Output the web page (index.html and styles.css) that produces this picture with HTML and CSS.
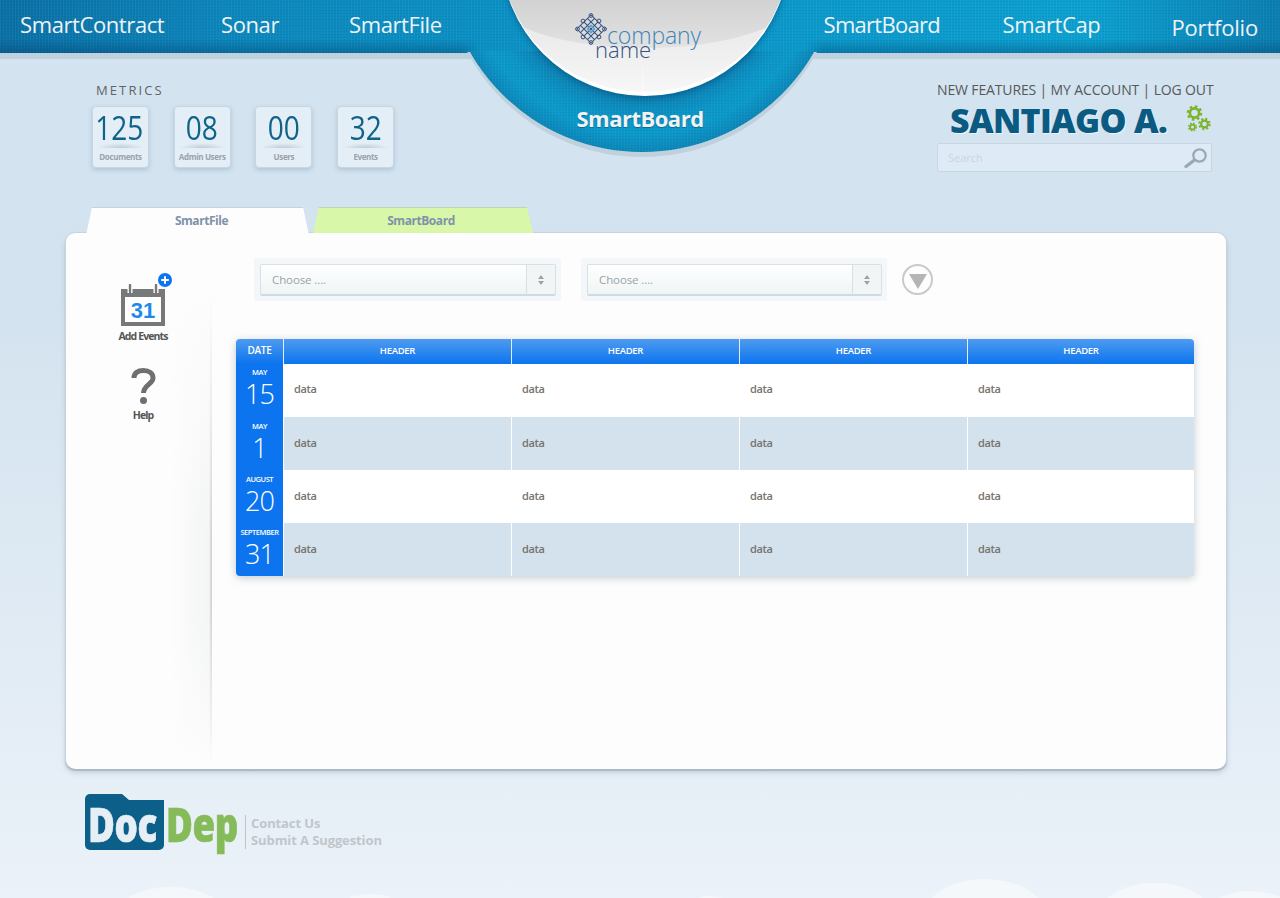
FILE: index.html
```html
<!DOCTYPE html>
<html lang="en">
<head>
<meta charset="utf-8">
<title>SmartBoard</title>
<link rel="stylesheet" href="styles.css">
</head>
<body>
<div class="clouds" aria-hidden="true"><i class="c1"></i><i class="c2"></i><i class="c3"></i><i class="c4"></i><i class="c5"></i><i class="c6"></i></div>
<header class="topbar">
  <nav class="nav nav-left"><a>SmartContract</a><a>Sonar</a><a>SmartFile</a></nav>
  <nav class="nav nav-right"><a>SmartBoard</a><a>SmartCap</a><a class="low">Portfolio</a></nav>
</header>
<div class="dome-shadow"></div>
<div class="dome">
  <div class="dome-bg"></div>
  <div class="plate">
    <div class="plate-shine"></div>
    <div class="logo">
      <svg class="flake" viewBox="0 0 32 32" fill="none" stroke="#33527f" stroke-width="1">
        <g transform="rotate(45 16 16)">
          <path d="M6 6h20v20H6zM11 6v20M16 6v20M21 6v20M6 11h20M6 16h20M6 21h20"/>
          <path d="M13.500 13.500h5v5h-5z" stroke="#5d9fd0" stroke-width="1.600"/>
        </g>
        <circle cx="16" cy="2.500" r="1.900"/><circle cx="16" cy="29.500" r="1.900"/><circle cx="2.500" cy="16" r="1.900"/><circle cx="29.500" cy="16" r="1.900"/>
        <circle cx="8" cy="8" r="1.900"/><circle cx="24" cy="8" r="1.900"/><circle cx="8" cy="24" r="1.900"/><circle cx="24" cy="24" r="1.900"/>
      </svg>
      <span class="logo-company">company</span>
      <span class="logo-name">name</span>
    </div>
  </div>
  <div class="dome-title">SmartBoard</div>
</div>

<section class="head">
  <div class="metrics">
    <h2 class="metrics-title">METRICS</h2>
    <div class="metric-row">
      <div class="metric"><b>125</b><span>Documents</span></div>
      <div class="metric"><b>08</b><span>Admin Users</span></div>
      <div class="metric"><b>00</b><span>Users</span></div>
      <div class="metric"><b>32</b><span>Events</span></div>
    </div>
  </div>
  <div class="account">
    <div class="account-links">NEW FEATURES | MY ACCOUNT | LOG OUT</div>
    <div class="account-user">
      <span class="user-name">SANTIAGO A.</span>
      <svg class="gears" viewBox="0 0 26 28" fill="none" stroke="#7cb42c">
        <circle cx="9.500" cy="8" r="4.600" stroke-width="2.600"/><circle cx="9.500" cy="8" r="6.600" stroke-width="2.400" stroke-dasharray="2.600 2.600"/>
        <circle cx="19.500" cy="19" r="3.400" stroke-width="2.200"/><circle cx="19.500" cy="19" r="5.200" stroke-width="2" stroke-dasharray="2.100 2"/>
        <circle cx="7.500" cy="22" r="2.400" stroke-width="1.800"/><circle cx="7.500" cy="22" r="3.800" stroke-width="1.600" stroke-dasharray="1.600 1.400"/>
      </svg>
    </div>
    <div class="search">
      <span>Search</span>
      <svg class="search-icon" viewBox="0 0 26 22" fill="none" stroke="#98a9b3">
        <circle cx="16.500" cy="8.500" r="6.200" stroke-width="2.200"/>
        <path d="M11.500 13L3 19.500" stroke-width="3.400" stroke-linecap="round"/>
      </svg>
    </div>
  </div>
</section>

<div class="tabs">
  <div class="tab tab-active">SmartFile</div>
  <div class="tab tab-green">SmartBoard</div>
</div>

<main class="card">
  <aside class="side">
    <div class="tool tool-events">
      <span class="badge"><svg viewBox="0 0 14 14"><circle cx="7" cy="7" r="7" fill="#0c74ee"/><path d="M7 3.200v7.600M3.200 7h7.600" stroke="#fff" stroke-width="2"/></svg></span>
      <svg class="cal" viewBox="0 0 44 42">
        <path d="M0 5h44v37H0z" fill="#77787a"/>
        <path d="M4 13h36v25H4z" fill="#fff"/>
        <path d="M9 0v9M35 0v9" stroke="#fff" stroke-width="5"/>
        <path d="M9 1v7M35 1v7" stroke="#77787a" stroke-width="2.400" stroke-linecap="round"/>
        <text x="22" y="34" text-anchor="middle" class="cal-num">31</text>
      </svg>
      <span class="tool-label">Add Events</span>
    </div>
    <div class="tool tool-help">
      <svg class="qmark" viewBox="0 0 25 36" fill="none" stroke="#6f6f6f">
        <path d="M3 10C3 5 7 2.500 12.500 2.500S22 5.500 22 10c0 6-9.500 7-9.500 15" stroke-width="5"/>
        <circle cx="12.500" cy="32.500" r="3.500" fill="#6f6f6f" stroke="none"/>
      </svg>
      <span class="tool-label">Help</span>
    </div>
  </aside>
  <div class="content">
    <div class="filters">
      <div class="select-wrap"><div class="select"><span class="select-text">Choose ....</span><span class="select-arrows"><i class="up"></i><i class="down"></i></span></div></div>
      <div class="select-wrap"><div class="select"><span class="select-text">Choose ....</span><span class="select-arrows"><i class="up"></i><i class="down"></i></span></div></div>
      <span class="go"><i></i></span>
    </div>
    <div class="table">
      <div class="th th-date">DATE</div><div class="th">HEADER</div><div class="th">HEADER</div><div class="th">HEADER</div><div class="th">HEADER</div>

      <div class="date"><small>MAY</small><b>15</b></div><div class="td">data</div><div class="td">data</div><div class="td">data</div><div class="td">data</div>
      <div class="date"><small>MAY</small><b>1</b></div><div class="td alt">data</div><div class="td alt">data</div><div class="td alt">data</div><div class="td alt">data</div>
      <div class="date"><small>AUGUST</small><b>20</b></div><div class="td">data</div><div class="td">data</div><div class="td">data</div><div class="td">data</div>
      <div class="date date-last"><small>SEPTEMBER</small><b>31</b></div><div class="td alt">data</div><div class="td alt">data</div><div class="td alt">data</div><div class="td alt">data</div>
    </div>
  </div>
</main>

<footer class="footer">
  <div class="brand">
    <div class="brand-doc"><span class="brand-text">Doc</span></div>
    <div class="brand-dep"><span class="brand-text">Dep</span></div>
  </div>
  <div class="foot-links"><a>Contact Us</a><a>Submit A Suggestion</a></div>
</footer>
</body>
</html>
```
FILE: styles.css
```css
* { box-sizing: border-box; }
html, body { margin: 0; height: 898px; overflow: hidden; }
body {
  position: relative;
  font-family: "Open Sans", "Liberation Sans", sans-serif;
  background: linear-gradient(#d3e3ef 0, #d3e3ef 300px, #e7eff7 800px, #ebf2f9 898px);
  color: #666;
}
a { color: inherit; }

/* top bar */
.topbar {
  height: 53px;
  display: flex;
  justify-content: space-between;
  position: relative;
  background:
    repeating-linear-gradient(90deg, rgba(255,255,255,.05) 0 1px, transparent 1px 3px),
    repeating-linear-gradient(0deg, rgba(0,40,80,.06) 0 1px, transparent 1px 3px),
    linear-gradient(90deg, #0a6fa5 0, #0b86bb 18%, #0a93c6 45%, #0a9ccd 75%, #0aa0d0 85%, #0a7db0 100%);
  box-shadow: 0 6px 0 #bfd1dd;
}
.topbar::after {
  content: "";
  position: absolute; left: 0; right: 0; bottom: 0; height: 14px;
  background: linear-gradient(rgba(0,50,90,0), rgba(0,50,90,.32));
  -webkit-mask-image: linear-gradient(90deg, #000 462px, transparent 480px, transparent 805px, #000 822px);
  mask-image: linear-gradient(90deg, #000 462px, transparent 480px, transparent 805px, #000 822px);
}
.nav { display: grid; color: #eef3f6; font-size: 22px; line-height: 30px; letter-spacing: -.4px; z-index: 1; padding-top: 9px; }
.nav-left { grid-template-columns: 201px 128px auto; padding-left: 20px; }
.nav-right { grid-template-columns: 179px 169px auto; padding-right: 22px; }
.nav-right a:first-child { letter-spacing: -.7px; }
.low { margin-top: 3px; letter-spacing: -.2px; }

/* dome */
.dome, .dome-shadow {
  position: absolute;
  left: 444px; top: -244px;
  width: 396px; height: 396px;
}
.dome-shadow {
  top: -239px; z-index: 1;
  border-radius: 50%;
  background: #bfd1dd;
  clip-path: inset(291px 0 0 0);
}
.dome { z-index: 2; }
.dome-bg {
  position: absolute; inset: 0;
  border-radius: 50%;
  background:
    repeating-linear-gradient(90deg, rgba(255,255,255,.04) 0 1px, transparent 1px 3px),
    repeating-linear-gradient(0deg, rgba(0,40,80,.05) 0 1px, transparent 1px 3px),
    radial-gradient(198px circle at 50% 50%, #0b84b6 146px, #0a96c7 166px, #0a99ca 180px, #0b86b8 198px);
  clip-path: inset(295px 0 0 0);
}
.plate {
  position: absolute;
  left: 57px; top: 52px;
  width: 288px; height: 288px;
  border-radius: 50%;
  overflow: hidden;
  background: linear-gradient(#ececec 230px, #f0f0f0 250px, #f8f8f8 288px);
  border-bottom: 4px solid #fff;
  box-shadow: 0 2px 6px rgba(0,50,90,.45);
}
.plate::after {
  content: ""; position: absolute; left: 141px; top: 252px; width: 1px; height: 34px;
  background: linear-gradient(rgba(255,255,255,0), #fdfdfd);
}
.plate-shine {
  position: absolute;
  left: -6px; top: 140px;
  width: 300px; height: 100px;
  border-radius: 50%;
  background: linear-gradient(#c6c6c6, #d2d2d2 52%, #e2e2e2);
}
.logo { position: absolute; left: 74px; top: 0; width: 160px; height: 288px; }
.flake { position: absolute; left: 0; top: 205px; width: 32px; height: 32px; }
.logo-company { position: absolute; left: 32px; top: 213px; font-size: 23px; line-height: 28px; font-weight: 300; color: #3f86b8; letter-spacing: -.1px; }
.logo-name { position: absolute; left: 20px; top: 229px; font-size: 22px; line-height: 24px; font-weight: 300; color: #33517f; }
.dome-title {
  position: absolute;
  left: 0; right: 4px; top: 347px;
  text-align: center;
  color: #f2f2f2;
  font-size: 22px; line-height: 30px; font-weight: 700; letter-spacing: -.5px;
  text-shadow: 0 1px 1px rgba(0,50,80,.4);
}

/* head */
.head { display: flex; justify-content: space-between; height: 154px; padding: 0 66px 0 92px; }
.metrics { padding-top: 28px; }
.metrics-title { margin: 0 0 7px 4px; font-size: 13px; line-height: 18px; font-weight: 400; letter-spacing: 2.1px; color: #5f6469; }
.metric-row { display: flex; gap: 24.7px; }
.metric {
  width: 57px; height: 62px;
  background: #e4eef6;
  border: 1px solid #c9d6e1;
  border-radius: 4px;
  box-shadow: 0 2px 4px rgba(130,160,185,.45);
  display: flex; flex-direction: column; align-items: center;
  position: relative;
}
.metric b { display: block; font-weight: 400; font-size: 33px; line-height: 41px; color: #0f6288; transform: scaleX(.85); white-space: nowrap; }
.metric:first-child b { margin-left: -3px; }
.metric span { font-size: 8px; line-height: 10px; font-weight: 700; color: #9aa2aa; margin-top: 4px; letter-spacing: -.35px; white-space: nowrap; }
.metric::after {
  content: ""; position: absolute; left: 4px; right: 4px; top: 36px; height: 5px;
  background: radial-gradient(ellipse at 50% 100%, rgba(140,150,160,.4), transparent 70%);
}
.account { width: 277px; padding-top: 28px; }
.account-links { font-size: 14px; line-height: 18px; color: #55595d; letter-spacing: -.14px; white-space: nowrap; }
.account-user { display: flex; align-items: center; height: 34px; padding-left: 13px; margin-top: 4px; position: relative; }
.user-name { font-size: 34px; line-height: 34px; font-weight: 800; color: #0b5a82; letter-spacing: -.7px; text-shadow: 1px 1px 0 #eef5fa; white-space: nowrap; }
.gears { position: absolute; left: 248px; top: 2px; width: 26px; height: 28px; }
.search {
  width: 275px; height: 29px; margin-top: 6px;
  background: #deebf7;
  border: 1px solid #c9d6e2; border-radius: 2px;
  padding-left: 10px;
  display: flex; align-items: center; justify-content: space-between;
  font-size: 11px; color: #c8d5e0;
}
.search-icon { width: 26px; height: 22px; margin-right: 2px; }

/* tabs */
.tabs { display: flex; height: 26px; padding-left: 85px; position: relative; z-index: 1; }
.tab {
  font-size: 12px; font-weight: 700; color: #7f92a8; letter-spacing: -.45px;
  text-align: center; line-height: 28px;
  position: relative;
}
.tab-active {
  width: 225px; height: 33px;
  padding-left: 8px;
  background: #fdfdfd;
  clip-path: polygon(0 100%, 7px 0, 218px 0, 225px 100%);
  z-index: 1;
}
.tab-active::before { content: ""; position: absolute; left: 7px; right: 7px; top: 0; height: 1px; background: #c5d3df; }
.tab-green {
  width: 220px; height: 26px; margin-left: 3px;
  padding-right: 4px;
  background: linear-gradient(#c3d2b8, #c3d2b8) top / 100% 1px no-repeat, #d9f7a8;
  clip-path: polygon(0 100%, 6px 0, 214px 0, 220px 100%);
}

/* card */
.card {
  width: 1162px; height: 537px; margin: -1px 0 0 65px;
  background: #fdfdfd;
  border: 1px solid #c6d4df;
  border-bottom: 0;
  border-radius: 10px;
  box-shadow: 0 2px 1px #aab9c4, 0 4px 5px rgba(150,170,185,.4);
  display: flex;
}
.side {
  width: 146px; flex: none;
  position: relative;
  padding: 51px 0 0 8px;
  display: flex; flex-direction: column; align-items: center;
}
.side::before {
  content: ""; position: absolute; left: 0; right: 0; top: 0; bottom: 0;
  background: linear-gradient(90deg, transparent 106px, rgba(232,234,236,.45) 143px, #ececec 144px, #c9cccf 145px, #dcdfe1 146px);
  -webkit-mask-image: linear-gradient(transparent 60px, rgba(0,0,0,.45) 180px, #000 300px, #000 380px, rgba(0,0,0,.4) 480px, transparent 530px);
  mask-image: linear-gradient(transparent 60px, rgba(0,0,0,.45) 180px, #000 300px, #000 380px, rgba(0,0,0,.4) 480px, transparent 530px);
}
.tool { position: relative; display: flex; flex-direction: column; align-items: center; width: 100%; }
.cal { width: 44px; height: 42px; }
.cal-num { font: 700 22px "Liberation Sans", sans-serif; fill: #1e8ae8; }
.badge { position: absolute; left: 84px; top: -11px; width: 14px; height: 14px; line-height: 0; }
.badge svg { width: 14px; height: 14px; }
.tool-label { font-size: 10.5px; font-weight: 700; color: #555; letter-spacing: -.9px; line-height: 14px; margin-top: 3px; white-space: nowrap; }
.tool-help { margin-top: 25px; }
.tool-help .tool-label { margin-top: 4px; }
.qmark { width: 25px; height: 36px; }
.content { flex: 1; padding: 25px 32px 0 24px; }
.filters { display: flex; align-items: flex-start; margin-left: 18px; }
.select-wrap { width: 307px; height: 43px; padding: 6px 5px 6px 6px; background: #f3f7f9; border-radius: 2px; margin-right: 20px; }
.select-wrap + .select-wrap { width: 306px; margin-right: 15px; }
.select {
  display: flex; height: 32px;
  background: linear-gradient(#fff, #eff4f5);
  border: 1px solid #d5e1e3;
  border-bottom: 2px solid #cddcdf;
  border-radius: 2px;
  font-size: 11.5px; color: #98a3a6;
}
.select-text { flex: 1; padding-left: 11px; line-height: 29px; letter-spacing: -.1px; }
.select-arrows { width: 29px; border-left: 1px solid #d7e0e4; display: flex; flex-direction: column; align-items: center; justify-content: center; gap: 2px; background: #f1f5f6; }
.select-arrows i { width: 0; height: 0; border-left: 3.5px solid transparent; border-right: 3.5px solid transparent; }
.select-arrows .up { border-bottom: 4px solid #9aa5aa; }
.select-arrows .down { border-top: 4px solid #9aa5aa; }
.go { width: 31px; height: 31px; margin-top: 6px; border: 2px solid #c9c9c9; border-radius: 50%; display: flex; align-items: center; justify-content: center; }
.go i { width: 0; height: 0; margin-top: 3px; border-left: 9px solid transparent; border-right: 9px solid transparent; border-top: 15px solid #b5b5b5; }

/* table */
.table {
  display: grid;
  grid-template-columns: 47px 228px 228px 228px 227px;
  grid-template-rows: 25px repeat(4, 53px);
  width: 958px;
  margin-top: 38px;
  border-radius: 4px;
  box-shadow: 0 2px 8px rgba(110,130,145,.4);
  background: #fff;
}
.th {
  background: linear-gradient(#4e9bf0, #0c74ee);
  color: #fff;
  font-size: 9.5px; font-weight: 600; letter-spacing: -.3px;
  text-align: center; line-height: 23px;
  border-left: 1px solid #e4eefa;
}
.th:nth-child(5) { border-top-right-radius: 4px; }
.th-date { border-left: 0; border-top-left-radius: 4px; font-size: 10px; }
.date {
  background: #0c74ee; color: #fff;
  display: flex; flex-direction: column; align-items: center;
  padding-top: 4px;
}
.date:nth-child(6) { padding-top: 3px; }
.date-last { border-bottom-left-radius: 4px; }
.date small { font-size: 7.5px; line-height: 10px; font-weight: 600; letter-spacing: -.45px; white-space: nowrap; }
.date b { font-size: 27px; line-height: 34px; font-weight: 300; letter-spacing: -.8px; }
.td {
  font-size: 11px; font-weight: 600; color: #77736f;
  padding-left: 10px; line-height: 52px;
  border-left: 1px solid #fff;
  letter-spacing: -.4px;
}
.td:nth-child(-n+10) { line-height: 50px; }
.alt { background: #d3e2ec; }

/* footer */
.footer { display: flex; align-items: flex-start; margin: 25px 0 0 85px; }
.brand { display: flex; flex: none; width: 159px; height: 58px; }
.brand-doc {
  flex: none;
  width: 79px; height: 56px;
  background: #0b5f88;
  border-radius: 5px;
  color: #e6eff6;
  clip-path: polygon(0 0, 37px 0, 44px 6px, 100% 6px, 100% 100%, 0 100%);
  padding-left: 3px;
}
.brand-dep { flex: none; color: #86bb5a; padding-left: 2px; }
.brand-text {
  display: inline-block;
  font-size: 47px; line-height: 60px; font-weight: 800;
  letter-spacing: -.5px;
  -webkit-text-stroke: .7px currentColor;
  transform: scaleX(.78);
  transform-origin: 0 50%;
}
.foot-links { display: flex; flex-direction: column; margin: 21px 0 0 1px; color: #c1c6cb; font-size: 13px; line-height: 17px; font-weight: 700; letter-spacing: -.1px; }
.foot-links a { border-left: 1px solid #bfc5ca; padding-left: 5px; white-space: nowrap; }

/* clouds */
.clouds { position: absolute; left: 0; right: 0; top: 0; height: 898px; overflow: hidden; }
.clouds i { position: absolute; border-radius: 50%; background: #f4f8fb; }
.c1 { left: 116px; top: 887px; width: 110px; height: 60px; }
.c2 { left: 335px; top: 894px; width: 70px; height: 40px; }
.c3 { left: 925px; top: 879px; width: 120px; height: 70px; }
.c4 { left: 1100px; top: 883px; width: 110px; height: 60px; }
.c5 { left: 1205px; top: 891px; width: 90px; height: 50px; }
.c6 { left: 685px; top: 896px; width: 50px; height: 30px; }
```
